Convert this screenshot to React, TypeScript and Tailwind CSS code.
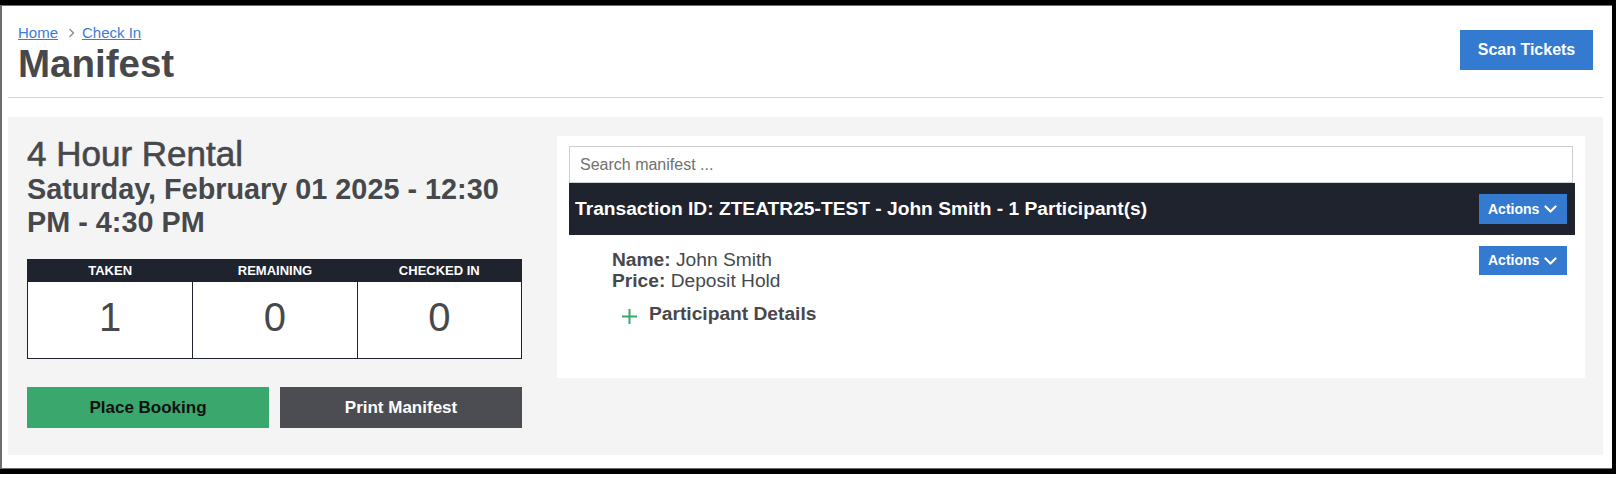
import React from 'react';

const ChevronDown: React.FC = () => (
  <svg width="13" height="8" viewBox="0 0 13 8" fill="none">
    <polyline points="1.5,1.5 6.5,6.5 11.5,1.5" stroke="white" strokeWidth="2.2" strokeLinecap="round" strokeLinejoin="round" />
  </svg>
);

const ActionsButton: React.FC<{ h: string }> = ({ h }) => (
  <button className={`flex ${h} w-[88px] items-center gap-[5px] bg-[#347ad0] pl-[9px] pr-[9px] text-[14px] font-bold text-white`}>
    Actions
    <ChevronDown />
  </button>
);

const stats = [
  { label: 'Taken', value: 1 },
  { label: 'Remaining', value: 0 },
  { label: 'Checked In', value: 0 },
];

const App: React.FC = () => {
  return (
    <div className="h-[479px] w-[1616px] bg-white font-['Liberation_Sans',Arial,sans-serif] text-[#47484c]">
      <div className="h-[474px] border-t-[5px] border-r-4 border-b-[5px] border-black">
        <div className="h-full border-l-2 border-t border-b border-[#6e6e6e] pl-[6px] pr-[9px]">
          {/* Header */}
          <div className="flex items-start justify-between">
            <div className="pl-[10px] pt-[17px]">
              <div className="flex h-[20px] items-center text-[15px] leading-[20px]">
                <a className="text-[#3a7bd5] underline">Home</a>
                <svg width="8" height="10" viewBox="0 0 8 10" fill="none" className="ml-[10px] mr-[6px]">
                  <polyline points="1.5,1 5.5,5 1.5,9" stroke="#8c8c8c" strokeWidth="1.3" />
                </svg>
                <a className="text-[#3a7bd5] underline">Check In</a>
              </div>
              <h1 className="text-[38.5px] font-bold leading-[42px]">Manifest</h1>
            </div>
            <button className="mr-[10px] mt-[24px] h-[40px] w-[133px] bg-[#347ad0] text-[16px] font-bold text-white">
              Scan Tickets
            </button>
          </div>
          <div className="mt-[12px] h-px bg-[#d3d3d3]" />

          {/* Panel */}
          <div className="mt-[19px] flex h-[338px] items-start bg-[#f4f4f4] pl-[19px] pt-[18px]">
            <div className="w-[495px]">
              <h2 className="text-[35px] leading-[38px] [-webkit-text-stroke:0.6px_#47484c]">4 Hour Rental</h2>
              <h3 className="text-[28.8px] font-bold leading-[33px]">Saturday, February 01 2025 - 12:30 PM - 4:30 PM</h3>

              <div className="mt-[20px] grid grid-cols-3 border border-[#1e232d]">
                {stats.map((s, i) => (
                  <div key={s.label} className={i > 0 ? 'border-l border-[#1e232d]' : ''}>
                    <div className="flex h-[22px] items-center justify-center bg-[#1e232d] text-[13px] font-bold uppercase text-white">
                      {s.label}
                    </div>
                    <div className="h-[76px] bg-white pt-[15px] text-center text-[40px] leading-[40px]">{s.value}</div>
                  </div>
                ))}
              </div>

              <div className="mt-[28px] flex gap-[11px]">
                <button className="h-[41px] flex-1 bg-[#3aa76d] text-[17px] font-bold text-[#111]">Place Booking</button>
                <button className="h-[41px] flex-1 bg-[#4c4d52] text-[17px] font-bold text-white">Print Manifest</button>
              </div>
            </div>

            <div className="ml-[35px] mt-px h-[242px] w-[1028px] bg-white pl-[12px] pr-[10px] pt-[10px]">
              <input
                className="block h-[37px] w-[calc(100%-2px)] border border-[#cfcfcf] px-[10px] text-[16px] outline-none placeholder:text-[#707070]"
                placeholder="Search manifest ..."
              />
              <div className="flex h-[52px] items-center justify-between bg-[#1e232d] pl-[6px] pr-[8px]">
                <span className="text-[19.2px] font-bold text-white">
                  Transaction ID: ZTEATR25-TEST - John Smith - 1 Participant(s)
                </span>
                <ActionsButton h="h-[30px]" />
              </div>
              <div className="flex items-start justify-between pr-[8px]">
                <div className="pl-[43px] pt-[13.5px] text-[19.2px] leading-[21.6px]">
                  <div>
                    <span className="font-bold">Name:</span> John Smith
                  </div>
                  <div>
                    <span className="font-bold">Price:</span> Deposit Hold
                  </div>
                  <div className="mt-[10px] flex h-[24px] items-center">
                    <svg width="15" height="15" viewBox="0 0 15 15" className="ml-[10px] mr-[12px] mt-[5px]">
                      <path d="M7.5 0v15M0 7.5h15" stroke="#3aa76d" strokeWidth="2" />
                    </svg>
                    <span className="font-bold leading-[24px]">Participant Details</span>
                  </div>
                </div>
                <div className="pt-[11px]">
                  <ActionsButton h="h-[29px]" />
                </div>
              </div>
            </div>
          </div>
        </div>
      </div>
    </div>
  );
};

export default App;
